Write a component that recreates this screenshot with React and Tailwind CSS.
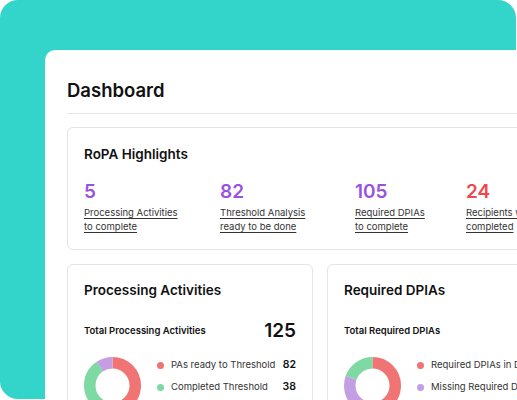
const highlights = [
  { value: '5', color: 'text-[#9b51e0]', lines: ['Processing Activities', 'to complete'], width: 'w-[136px]' },
  { value: '82', color: 'text-[#9b51e0]', lines: ['Threshold Analysis', 'ready to be done'], width: 'w-[135px]' },
  { value: '105', color: 'text-[#9b51e0]', lines: ['Required DPIAs', 'to complete'], width: 'w-[111px]' },
  { value: '24', color: 'text-[#f2464f]', lines: ['Recipients with TIA', 'completed'], width: 'w-[140px]' },
]

const RED = '#f07474'
const GREEN = '#7ed9a2'
const PURPLE = '#c39ee3'

const paCard = {
  title: 'Processing Activities',
  totalLabel: 'Total Processing Activities',
  total: 125,
  segments: [
    { color: RED, share: 0.585 },
    { color: GREEN, share: 0.315 },
    { color: PURPLE, share: 0.1 },
  ],
  legend: [
    { label: 'PAs ready to Threshold', value: 82, dot: 'bg-[#f07474]' },
    { label: 'Completed Threshold', value: 38, dot: 'bg-[#7ed9a2]' },
  ],
}

const dpiaCard = {
  title: 'Required DPIAs',
  totalLabel: 'Total Required DPIAs',
  total: 105,
  segments: [
    { color: RED, share: 0.6 },
    { color: PURPLE, share: 0.2 },
    { color: GREEN, share: 0.2 },
  ],
  legend: [
    { label: 'Required DPIAs in DPO review', value: 64, dot: 'bg-[#f07474]' },
    { label: 'Missing Required DPIAs', value: 41, dot: 'bg-[#c39ee3]' },
  ],
}

function Donut({ segments }) {
  const r = 22.75
  const c = 2 * Math.PI * r
  let start = 0
  return (
    <svg width="57" height="57" viewBox="0 0 57 57" className="shrink-0">
      <g transform="rotate(-90 28.5 28.5)">
        {segments.map((s, i) => {
          const len = s.share * c
          const el = (
            <circle
              key={i}
              cx="28.5"
              cy="28.5"
              r={r}
              fill="none"
              stroke={s.color}
              strokeWidth="11.5"
              strokeDasharray={`${len} ${c - len}`}
              strokeDashoffset={-start}
            />
          )
          start += len
          return el
        })}
      </g>
    </svg>
  )
}

function ChartCard({ data }) {
  return (
    <article className="w-[246px] shrink-0 rounded-[6px] border border-[#e4e4e7] bg-white px-[16px] pt-[15px]">
      <h2 className="text-[13.5px] font-semibold leading-[20px] text-[#111]">{data.title}</h2>
      <div className="mt-[19px] flex items-center justify-between">
        <span className="text-[9.5px] font-semibold text-[#111]">{data.totalLabel}</span>
        <span className="text-[19px] font-semibold leading-[24px] text-[#111]">{data.total}</span>
      </div>
      <div className="mt-[14px] flex items-start gap-[16px]">
        <Donut segments={data.segments} />
        <div className="flex flex-1 flex-col gap-[8px] pt-[1px]">
          {data.legend.map((item) => (
            <div key={item.label} className="flex h-[14px] items-center">
              <span className={`h-[7px] w-[7px] shrink-0 rounded-full ${item.dot}`} />
              <span className="ml-[7px] flex-1 whitespace-nowrap text-[9.5px] text-[#333]">{item.label}</span>
              <span className="text-[10.5px] font-semibold text-[#111]">{item.value}</span>
            </div>
          ))}
        </div>
      </div>
    </article>
  )
}

export default function App() {
  return (
    <div className="h-[400px] w-[517px] overflow-hidden bg-white font-['Inter',sans-serif]">
      <div className="h-[399px] w-[516px] rounded-[18px] bg-[#33d4c9] pl-[45px] pt-[50px]">
        <div className="h-[360px] w-[600px] rounded-tl-[10px] bg-white px-[22px] pt-[26px]">
          <h1 className="border-b border-[#e5e7eb] pb-[9px] text-[18.5px] font-semibold leading-[28px] text-[#111]">
            Dashboard
          </h1>

          <section className="mt-[13px] rounded-[6px] border border-[#e4e4e7] px-[16px] pb-[15px] pt-[16px]">
            <h2 className="text-[13.5px] font-semibold leading-[20px] text-[#111]">RoPA Highlights</h2>
            <div className="mt-[16px] flex">
              {highlights.map((h) => (
                <div key={h.value} className={`${h.width} shrink-0`}>
                  <p className={`text-[19px] font-semibold leading-[24px] ${h.color}`}>{h.value}</p>
                  <p className="mt-[2px] whitespace-nowrap text-[9.5px] leading-[14px] text-[#333] underline underline-offset-[2px]">
                    {h.lines[0]}
                    <br />
                    {h.lines[1]}
                  </p>
                </div>
              ))}
            </div>
          </section>

          <div className="mt-[14px] flex gap-[14px]">
            <ChartCard data={paCard} />
            <ChartCard data={dpiaCard} />
          </div>
        </div>
      </div>
    </div>
  )
}
